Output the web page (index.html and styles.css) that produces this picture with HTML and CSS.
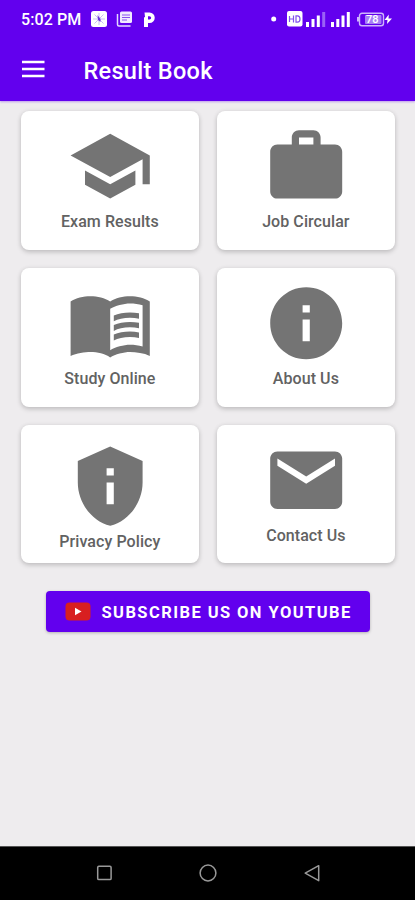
FILE: index.html
```html
<!DOCTYPE html>
<html lang="en">
<head>
<meta charset="utf-8">
<title>Result Book</title>
<link rel="stylesheet" href="styles.css">
</head>
<body>
<header class="header">
  <div class="status">
    <span class="time">5:02 PM</span>
    <svg class="status-left" width="68" height="18" viewBox="0 0 68 18">
      <rect x="1" y="1" width="16" height="16" rx="2.5" fill="#fff"/>
      <path d="M4.500 4.500l9 9M13.500 4.500l-9 9M9 3v12M3 9h12" stroke="#cdbcf8" stroke-width="1"/>
      <path d="M7.500 5l3 4v3l-2.500-2z" fill="#6a35d8"/>
      <rect x="30" y="1.500" width="12" height="11.500" rx="1.500" fill="#f1eaff"/>
      <path d="M27.500 4v10.500q0 1.500 1.500 1.500h11.500" fill="none" stroke="#e4d8ff" stroke-width="1.500"/>
      <path d="M32 5h8M32 7.500h8M32 10h5" stroke="#8a50f0" stroke-width="1"/>
      <path fill-rule="evenodd" d="M54.500 2.500h5a5 5 0 0 1 0 10.500h-1.500v4h-4V7.500l1-.5zM58 6.200v3.300h1.500a1.650 1.650 0 0 0 0-3.300z" fill="#fff"/>
    </svg>
    <svg class="status-right" width="124" height="18" viewBox="0 0 124 18">
      <circle cx="4.700" cy="9" r="2.500" fill="#fff"/>
      <rect x="18" y="1" width="15.500" height="15.500" rx="2" fill="#fff"/>
      <path d="M20.500 6v6M20.500 9h4M24.500 5.500v7M27 5.800h1.500q2.500 0 2.500 3.200t-2.500 3.200H27z" fill="none" stroke="#8250ee" stroke-width="1.200"/>
      <path d="M37 12h3v5h-3zM42.500 9h3v8h-3zM47.800 5.500h3V17h-3zM62 12h3v5h-3zM67.300 9h3v8h-3zM72.500 5.500h3V17h-3zM77.800 2h3v15h-3z" fill="#fff"/>
      <path d="M53.200 2h3v15h-3z" fill="#9a62f5"/>
      <rect x="90.500" y="3.200" width="24" height="12.600" rx="2.500" fill="none" stroke="#cdb4fb" stroke-width="1.400"/>
      <path d="M89 7v4.500" stroke="#cdb4fb" stroke-width="2"/>
      <rect x="96" y="5" width="16.500" height="9" rx="1" fill="#a67df6"/>
      <text class="battery" x="97" y="13.300">78</text>
      <path d="M119.800 4.500l-4.300 5.500h3l-.5 4 5-5.500h-3.500z" fill="#fff"/>
    </svg>
  </div>
  <div class="toolbar">
    <svg width="23" height="18" viewBox="0 0 23 18"><path d="M0 2h22.500M0 9h22.500M0 16h22.500" stroke="#fff" stroke-width="2.500"/></svg>
    <h1>Result Book</h1>
  </div>
</header>
<main>
  <div class="grid">
    <section class="card">
      <svg class="icon" viewBox="0 0 24 24"><path d="M5 13.180v4L12 21l7-3.820v-4L12 17l-7-3.820zM12 3L1 9l11 6 9-4.910V17h2V9L12 3z"/></svg>
      <span class="label">Exam Results</span>
    </section>
    <section class="card">
      <svg class="icon" viewBox="0 0 24 24"><path d="M20 6h-4V4c0-1.110-.89-2-2-2h-4c-1.110 0-2 .89-2 2v2H4c-1.110 0-2 .89-2 2v11c0 1.110.89 2 2 2h16c1.110 0 2-.89 2-2V8c0-1.110-.89-2-2-2zm-6 0h-4V4h4v2z"/></svg>
      <span class="label">Job Circular</span>
    </section>
    <section class="card">
      <svg class="icon" viewBox="0 0 24 24"><path fill-rule="evenodd" d="M12 6c-1.450-1.100-3.550-1.500-5.500-1.500S2.450 4.900 1 6v15.100C2.600 20.350 5 20 6.500 20c1.950 0 4.050.4 5.500 1.500 1.350-.85 3.800-1.500 5.500-1.500 1.650 0 3.900.3 5.500 1.100V6c-1.450-1.100-3.550-1.500-5.500-1.500S13.450 4.900 12 6zM21 18.500c-1.100-.35-2.300-.5-3.500-.5-1.700 0-4.150.65-5.500 1.500V8c1.350-.85 3.800-1.500 5.500-1.500 1.200 0 2.400.15 3.500.5v11.500z"/><path d="M17.500 10.500c.88 0 1.730.09 2.500.26V9.240c-.79-.15-1.640-.24-2.500-.24-1.700 0-3.240.29-4.500.83v1.660c1.130-.64 2.700-.99 4.500-.99zM13 12.490v1.660c1.130-.64 2.700-.99 4.500-.99.88 0 1.730.09 2.500.26V11.900c-.79-.15-1.640-.24-2.500-.24-1.700 0-3.240.3-4.500.83zM17.500 14.330c-1.700 0-3.240.29-4.500.83v1.660c1.130-.64 2.700-.99 4.500-.99.88 0 1.730.09 2.500.26v-1.520c-.79-.16-1.640-.24-2.500-.24z"/></svg>
      <span class="label">Study Online</span>
    </section>
    <section class="card">
      <svg class="icon" viewBox="0 0 24 24"><path d="M12 2C6.480 2 2 6.480 2 12s4.480 10 10 10 10-4.480 10-10S17.520 2 12 2zm1 15h-2v-6h2v6zm0-8h-2V7h2v2z"/></svg>
      <span class="label">About Us</span>
    </section>
    <section class="card privacy-card">
      <svg class="icon" viewBox="0 0 24 24"><path d="M12 1L3 5v6c0 5.550 3.840 10.740 9 12 5.160-1.260 9-6.450 9-12V5l-9-4zm1 16h-2v-6h2v6zm0-8h-2V7h2v2z"/></svg>
      <span class="label">Privacy Policy</span>
    </section>
    <section class="card">
      <svg class="icon" viewBox="0 0 24 24"><path d="M20 4H4c-1.100 0-2 .9-2 2v12c0 1.100.9 2 2 2h16c1.100 0 2-.9 2-2V6c0-1.100-.9-2-2-2zm0 4l-8 5-8-5V6l8 5 8-5v2z"/></svg>
      <span class="label">Contact Us</span>
    </section>
  </div>
  <button class="subscribe">
    <svg width="26" height="19" viewBox="0 0 26 19"><rect x=".5" y=".5" width="25" height="18" rx="4" fill="#d81f20"/><path d="M10 5.700v7.600l6.500-3.800z" fill="#fff"/></svg>
    <span>SUBSCRIBE US ON YOUTUBE</span>
  </button>
</main>
<nav class="navbar">
  <svg width="16" height="18" viewBox="0 0 16 18"><rect x="1.700" y="2.200" width="13.400" height="13.400" rx="1.200"/></svg>
  <svg width="18" height="18" viewBox="0 0 18 18"><circle cx="9" cy="9" r="7.900"/></svg>
  <svg width="18" height="18" viewBox="0 0 18 18"><path d="M15.700 1.700v15L2.200 9.200z"/></svg>
</nav>
</body>
</html>
```
FILE: styles.css
```css
* { box-sizing: border-box; }
body {
  margin: 0;
  height: 900px;
  display: flex;
  flex-direction: column;
  background: #eeecee;
  font-family: Roboto, sans-serif;
  overflow: hidden;
}
svg { display: block; flex: none; }
.header {
  height: 101px;
  background: #6200ee;
  color: #fff;
  flex: none;
  box-shadow: 0 1px 2px rgba(98, 0, 238, .35);
}
.status {
  height: 40px;
  padding: 10px 22px 0 21px;
  display: flex;
  align-items: flex-start;
}
.time {
  width: 69px;
  font-size: 16px;
  line-height: 20px;
  font-weight: 500;
  letter-spacing: .1px;
  white-space: nowrap;
}
.status-right { margin-left: auto; }
.battery { font-size: 11px; font-weight: 500; fill: #fff; }
.toolbar {
  height: 58px;
  padding-left: 21.5px;
  display: flex;
  align-items: center;
  gap: 39px;
}
h1 {
  margin: 3px 0 0;
  font-size: 23.5px;
  font-weight: 500;
  line-height: 28px;
  letter-spacing: .3px;
}
main {
  flex: 1;
  display: flex;
  flex-direction: column;
  align-items: center;
}
.grid {
  align-self: stretch;
  padding: 10px 20.5px 0 21px;
  display: grid;
  grid-template-columns: 1fr 1fr;
  grid-auto-rows: 138.8px;
  gap: 18px;
}
.card {
  background: #fff;
  border-radius: 8px;
  box-shadow: 0 2px 5px rgba(0, 0, 0, .19), 0 0 5px rgba(0, 0, 0, .05);
  padding-top: 12px;
  display: flex;
  flex-direction: column;
  align-items: center;
}
.card:nth-child(even) { padding-left: .5px; }
.icon { width: 86.4px; height: 86.4px; fill: #747474; }
.label {
  margin-top: 2.6px;
  font-size: 16px;
  line-height: 20px;
  font-weight: 500;
  color: #626262;
  letter-spacing: .07px;
  white-space: nowrap;
}
.privacy-card { padding-top: 18px; }
.subscribe {
  margin-top: 27.5px;
  width: 324px;
  height: 41px;
  padding: 0 0 0 19px;
  border: 0;
  border-radius: 4px;
  background: #6200ee;
  color: #fff;
  display: flex;
  align-items: center;
  gap: 11px;
  font: 700 16.5px/20px Roboto, sans-serif;
  letter-spacing: 1.43px;
  white-space: nowrap;
  box-shadow: 0 1px 3px rgba(0, 0, 0, .25);
}
.subscribe span { padding-top: 4px; }
.navbar {
  height: 54.5px;
  flex: none;
  background: #000;
  border-top: 1px solid #555;
  display: flex;
  align-items: center;
  justify-content: space-between;
  padding: 0 94px 0 96px;
}
.navbar svg { fill: none; stroke: #999; stroke-width: 1.5; stroke-linejoin: round; }
```
